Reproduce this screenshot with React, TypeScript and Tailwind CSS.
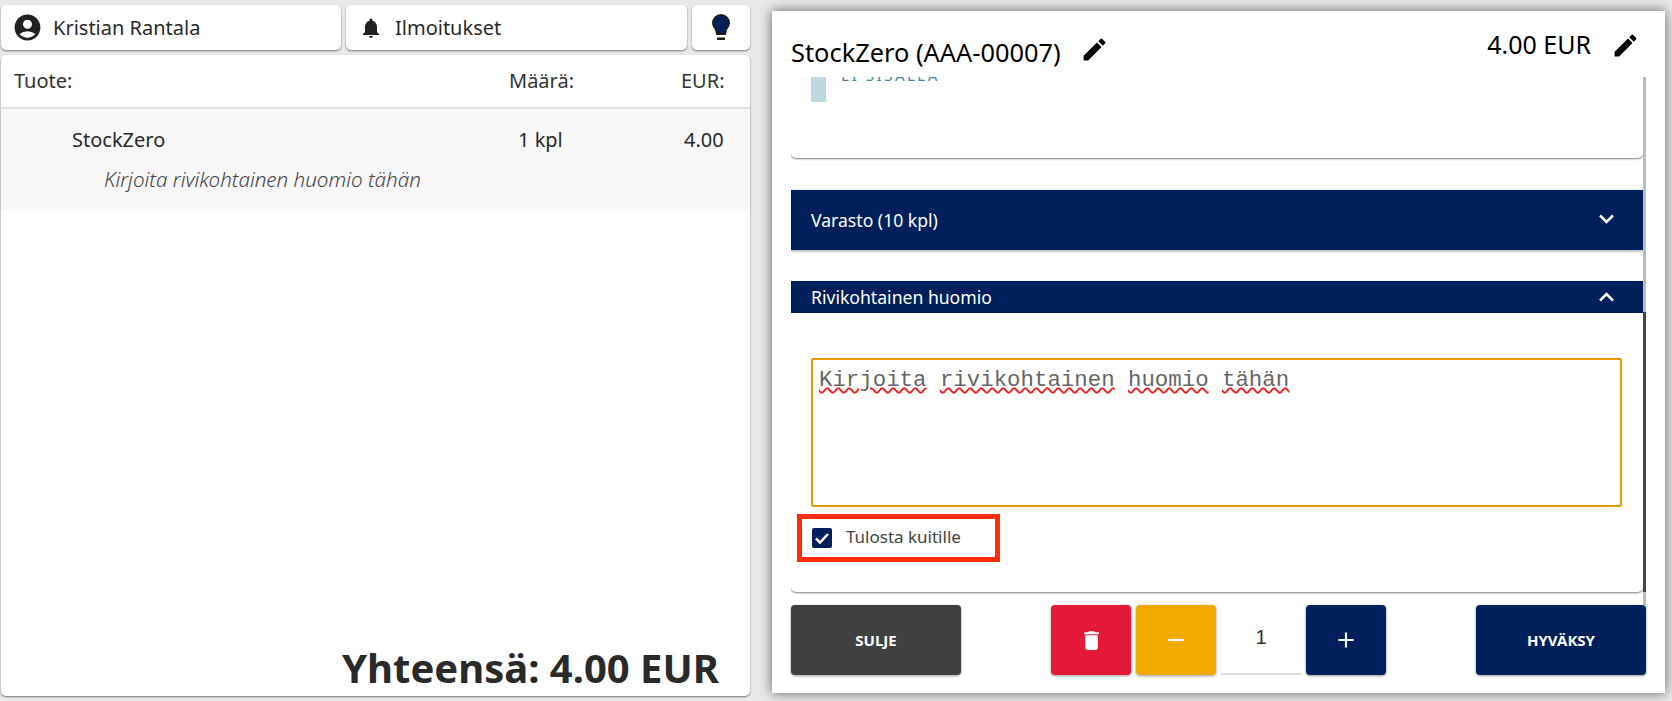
import React from 'react';
import { MdAccountCircle, MdNotifications, MdEdit, MdDelete, MdAdd, MdRemove } from 'react-icons/md';

const words = ['Kirjoita', 'rivikohtainen', 'huomio', 'tähän'];

const Chevron: React.FC<{ up?: boolean }> = ({ up }) => (
  <svg viewBox="0 0 15 10" className="w-[15px] h-[10px]">
    <polyline points={up ? '1,8.500 7.500,2 14,8.500' : '1,1.500 7.500,8 14,1.500'} fill="none" stroke="white" strokeWidth="2.500" />
  </svg>
);

const App: React.FC = () => {
  return (
    <div className="w-[1672px] h-[701px] overflow-hidden flex bg-[#e9e9e9] text-[#2a2a2a] font-['Noto_Sans',sans-serif]">
      {/* vasen puoli */}
      <div className="w-[749px] ml-px pt-[5px] pb-[5px] flex flex-col gap-[5px] shrink-0">
        <div className="flex gap-[5px] h-[45px]">
          <div className="w-[340px] bg-white rounded-[5px] shadow-[0_1px_2px_rgba(0,0,0,0.5)] flex items-center pl-[11px] gap-[10px] text-[20px]">
            <MdAccountCircle className="w-[31px] h-[31px] text-[#212121]" />
            <span>Kristian Rantala</span>
          </div>
          <div className="w-[341px] bg-white rounded-[5px] shadow-[0_1px_2px_rgba(0,0,0,0.5)] flex items-center pl-[13px] gap-[12px] text-[20px]">
            <MdNotifications className="w-[24px] h-[24px] text-[#212121]" />
            <span>Ilmoitukset</span>
          </div>
          <div className="flex-1 bg-white rounded-[5px] shadow-[0_1px_2px_rgba(0,0,0,0.5)] flex items-center justify-center">
            <svg viewBox="0 0 18 27" className="w-[18px] h-[27px]">
              <path d="M9 1a8 8 0 0 0-8 8c0 3 2 4.800 3 6.500L5 20h8l1-4.500c1-1.700 3-3.500 3-6.500a8 8 0 0 0-8-8z" fill="#00205b" stroke="#1c1c1c" strokeWidth="2" />
              <rect x="5" y="23.500" width="8" height="2.500" fill="#1c1c1c" />
            </svg>
          </div>
        </div>

        <div className="flex-1 bg-white rounded-[5px] shadow-[0_1px_2px_rgba(0,0,0,0.5)] flex flex-col">
          <div className="h-[54px] border-b-2 border-[#e0e0e0] flex items-center text-[20px] text-[#333]">
            <span className="pl-[13px] flex-1">Tuote:</span>
            <span className="w-[172px]">Määrä:</span>
            <span className="w-[69px]">EUR:</span>
          </div>
          <div className="h-[102px] bg-[#f7f7f7] flex flex-col">
            <div className="flex items-center h-[62px] text-[20px]">
              <span className="pl-[71px] flex-1">StockZero</span>
              <span className="w-[166px]">1 kpl</span>
              <span className="w-[66px]">4.00</span>
            </div>
            <span className="pl-[103px] text-[20.6px] italic font-light text-[#444] leading-[25px] -mt-[4px]">Kirjoita rivikohtainen huomio tähän</span>
          </div>
          <div className="flex-1 flex items-end justify-end pr-[31px] pb-[1px]">
            <span className="text-[40px] font-bold leading-[54px]">Yhteensä: 4.00 EUR</span>
          </div>
        </div>
      </div>

      {/* tuoteikkuna */}
      <div className="w-[893px] h-[682px] ml-[22px] mt-[11px] bg-white shadow-[0_0_12px_rgba(0,0,0,0.6)] px-[19px] flex flex-col shrink-0">
        <div className="h-[66px] flex justify-between text-black">
          <div className="flex items-center gap-[19px] pt-[16px]">
            <span className="text-[25.4px]">StockZero (AAA-00007)</span>
            <MdEdit className="w-[29px] h-[29px] -mt-[6px]" />
          </div>
          <div className="flex items-center gap-[20px] pr-[6px] pt-[2px]">
            <span className="text-[25px]">4.00 EUR</span>
            <MdEdit className="w-[29px] h-[29px]" />
          </div>
        </div>

        <div className="h-[528px] flex">
          <div className="w-[852px] overflow-hidden flex flex-col">
            <div className="h-[81px] mb-[32px] bg-white rounded-b-[5px] shadow-[0_1px_2px_rgba(0,0,0,0.5)] shrink-0 flex pl-[20px] gap-[15px] overflow-hidden">
              <div className="w-[15px] h-[25px] bg-[#bcd7de]" />
              <span className="text-[15px] leading-[20px] -mt-[12px] tracking-[2.5px] text-[#3f8aa0]">EI SISÄLLÄ</span>
            </div>

            <div className="h-[60px] mb-[31px] bg-[#00205b] text-white flex items-center justify-between pl-[20px] pr-[29px] text-[17.6px] shrink-0 shadow-[0_1px_3px_rgba(0,0,0,0.4)]">
              <span>Varasto (10 kpl)</span>
              <span className="-mt-[3px]"><Chevron /></span>
            </div>

            <div className="h-[32px] bg-[#00205b] text-white flex items-center justify-between pl-[20px] pr-[29px] text-[17.6px] shrink-0">
              <span>Rivikohtainen huomio</span>
              <Chevron up />
            </div>

            <div className="h-[279px] bg-white rounded-b-[5px] shadow-[0_1px_2px_rgba(0,0,0,0.5)] pt-[45px] pl-[20px] pr-[21px] shrink-0">
              <div className="h-[149px] border-2 border-[#e59a00] rounded-[2px] px-[6px] pt-[5px] font-['Liberation_Mono',monospace] text-[22.4px] leading-[30px] text-[#666] flex gap-[13.4px] items-start">
                {words.map((w) => (
                  <span key={w} className="underline decoration-wavy decoration-[#f02020] decoration-[1.5px]">{w}</span>
                ))}
              </div>
              <div className="w-[203px] h-[48px] mt-[7px] -ml-[14px] border-[5px] border-[#ff2d0a] flex items-center pl-[10px] gap-[14px] text-[17px] text-[#444]">
                <div className="w-[20px] h-[20px] rounded-[2px] bg-[#00205b] flex items-center justify-center">
                  <svg viewBox="0 0 20 20" className="w-[20px] h-[20px]">
                    <polyline points="4,10.500 8,14.500 16,6" fill="none" stroke="white" strokeWidth="2.500" />
                  </svg>
                </div>
                <span className="-mt-[3px]">Tulosta kuitille</span>
              </div>
            </div>
          </div>
          <div className="w-[3px] flex flex-col bg-[#bdbdbd]">
            <div className="h-[235px]" />
            <div className="h-[280px] bg-[#444]" />
          </div>
        </div>

        <div className="flex justify-between">
          <button className="w-[170px] h-[70px] rounded-[4px] bg-[#404040] text-white text-[15px] font-bold shadow-[0_1px_3px_rgba(0,0,0,0.4)]">SULJE</button>
          <div className="flex gap-[5px]">
            <button className="w-[80px] h-[70px] rounded-[4px] bg-[#e31937] text-white flex items-center justify-center shadow-[0_1px_3px_rgba(0,0,0,0.4)]">
              <MdDelete className="w-[25px] h-[25px]" />
            </button>
            <button className="w-[80px] h-[70px] rounded-[4px] bg-[#f2a900] text-white flex items-center justify-center shadow-[0_1px_3px_rgba(0,0,0,0.4)]">
              <MdRemove className="w-[26px] h-[26px]" />
            </button>
            <div className="w-[80px] h-[70px] border-b-2 border-[#ddd] flex items-center justify-center font-['Liberation_Sans',sans-serif] text-[20px] text-[#333]">
              <span className="-mt-[4px]">1</span>
            </div>
            <button className="w-[80px] h-[70px] rounded-[4px] bg-[#00205b] text-white flex items-center justify-center shadow-[0_1px_3px_rgba(0,0,0,0.4)]">
              <MdAdd className="w-[26px] h-[26px]" />
            </button>
          </div>
          <button className="w-[170px] h-[70px] rounded-[4px] bg-[#00205b] text-white text-[15px] font-bold shadow-[0_1px_3px_rgba(0,0,0,0.4)]">HYVÄKSY</button>
        </div>
      </div>
    </div>
  );
};

export default App;
